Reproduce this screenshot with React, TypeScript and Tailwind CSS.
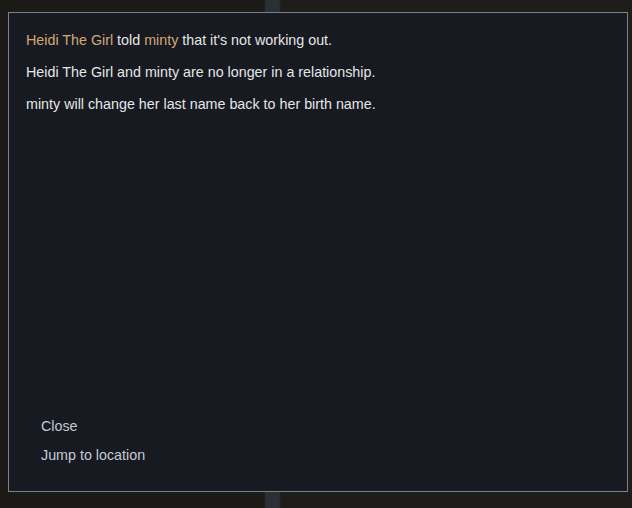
export default function App() {
  const name = 'text-[#d3a878]';

  return (
    <div
      className="h-[508px] w-[632px] overflow-hidden pt-[12px] pl-[8px] bg-[linear-gradient(to_right,#1b1a17_0px,#1b1a17_264px,#2c3036_266px,#2c3036_279px,#1e1d1a_281px),linear-gradient(to_bottom,#1a1916,#2a2a24)]"
      style={{ fontFamily: '"Liberation Sans", Arial, sans-serif' }}
    >
      <div className="flex h-[480px] w-[620px] flex-col justify-between border border-[#7b8189] bg-[#171a20] px-[17px] pt-[17px] pb-[26px]">
        <div className="flex flex-col gap-[12px] text-[14.3px] leading-[20px] text-[#e6e6e6]">
          <p>
            <span className={name}>Heidi The Girl</span> told{' '}
            <span className={name}>minty</span> that it's not working out.
          </p>
          <p>Heidi The Girl and minty are no longer in a relationship.</p>
          <p>minty will change her last name back to her birth name.</p>
        </div>

        <div className="flex flex-col items-start gap-[9px] pl-[15px] text-[14.3px] leading-[20px] text-[#c3cad6]">
          <button>Close</button>
          <button>Jump to location</button>
        </div>
      </div>
    </div>
  );
}
